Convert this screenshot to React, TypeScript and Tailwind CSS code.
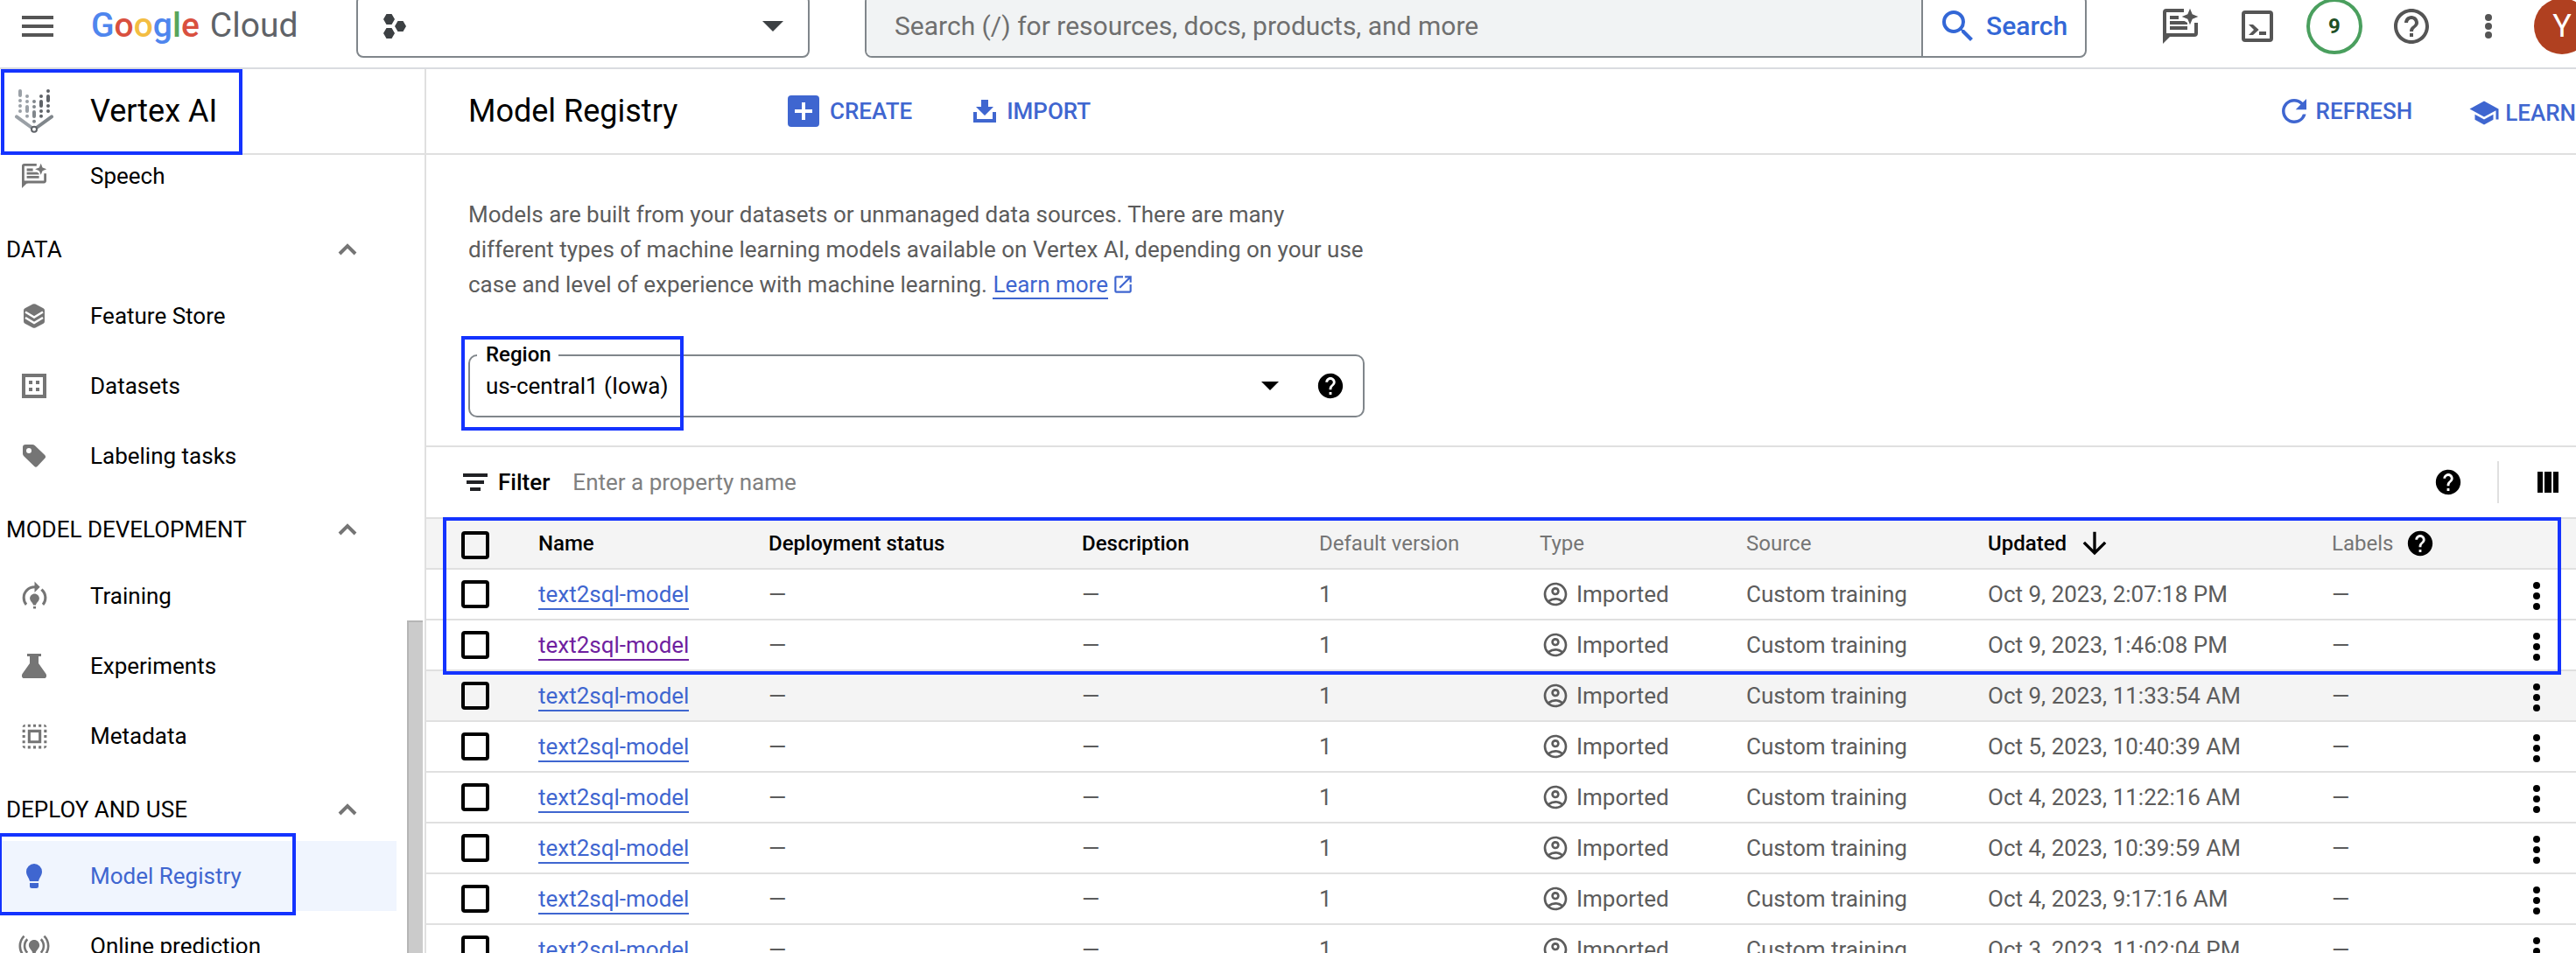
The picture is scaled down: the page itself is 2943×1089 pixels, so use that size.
import type { ReactNode } from "react";
import {
  MdArrowDownward,
  MdHelp,
  MdHelpOutline,
  MdMenu,
  MdModelTraining,
  MdOnlinePrediction,
  MdOpenInNew,
  MdOutlineAccountCircle,
  MdRefresh,
  MdSchool,
  MdSearch,
  MdSelectAll,
} from "react-icons/md";

function ChatSparkIcon({ className }: { className: string }) {
  return (
    <svg viewBox="0 0 120 120" className={className} aria-hidden="true">
      <path d="M72 6H12a6 6 0 0 0-6 6V90H108a6 6 0 0 0 6-6V48" fill="none" stroke="currentColor" strokeWidth="12" />
      <path d="M0 120V86h28v10h-4z" fill="currentColor" />
      <path d="M24 24h30v12H24zM24 42h50l10 6v6H24zM24 60h60v12H24z" fill="currentColor" />
      <path d="M93-1l8 20 20 8-20 8-8 20-8-20-20-8 20-8z" fill="currentColor" />
    </svg>
  );
}

function TerminalIcon() {
  return (
    <svg viewBox="0 0 108 108" className="size-9" aria-hidden="true">
      <rect x="6" y="6" width="96" height="96" rx="6" fill="none" stroke="currentColor" strokeWidth="12" />
      <path d="M24 48h15l20 18-20 18H24l18-18zM60 72h24v12H60z" fill="currentColor" />
    </svg>
  );
}

function ProjectIcon() {
  return (
    <svg viewBox="0 0 26 28" className="h-7 w-[26px]" fill="#3c4043" aria-hidden="true">
      <path d="M3.500 0h6L13 6l-3.500 6h-6L0 6zM3.500 16h6l3.500 6-3.500 6h-6L0 22zM16.500 8h6l3.500 6-3.500 6h-6L13 14z" />
    </svg>
  );
}

function VertexIcon() {
  return (
    <svg viewBox="51 306 132 150" className="h-[50px] w-11" fill="none" strokeWidth="12" strokeLinecap="round" aria-hidden="true">
      <g stroke="#9aa0a6">
        <path d="M69 312V327M69 345v.1M69 363v.1M69 381v.1M93 330v.1M93 348v.1M93 366V381M93 398v.1M57 400L109 438" />
      </g>
      <g stroke="#80868b">
        <path d="M117 348v.1M117 366v.1M117 384V399M117 416v.1M177 400L125 438" />
      </g>
      <g stroke="#5f6368">
        <path d="M141 330v.1M141 348V363M141 381v.1M141 398v.1M165 312v.1M165 330V345M165 363v.1M165 381v.1" />
      </g>
      <circle cx="117" cy="443" r="9" fill="#fff" stroke="#5f6368" strokeWidth="6" />
    </svg>
  );
}

function LayersIcon() {
  return (
    <svg viewBox="0 0 24 28" className="h-7 w-6" aria-hidden="true">
      <path d="M10.500.600a3 3 0 0 1 3 0l9 4.600A3 3 0 0 1 24 7.800v12.400a3 3 0 0 1-1.500 2.600l-9 4.600a3 3 0 0 1-3 0l-9-4.600A3 3 0 0 1 0 20.200V7.800a3 3 0 0 1 1.500-2.600z" fill="currentColor" />
      <path d="M2 9.500l10 6 10-6M2 16l10 6 10-6" fill="none" stroke="#fff" strokeWidth="2.500" />
    </svg>
  );
}

function DatasetIcon() {
  return (
    <svg viewBox="0 0 28 28" className="size-7" aria-hidden="true">
      <rect x="2" y="2" width="24" height="24" fill="none" stroke="currentColor" strokeWidth="4" />
      <path d="M8 8h4v4H8zM16 8h4v4h-4zM8 16h4v4H8zM16 16h4v4h-4z" fill="currentColor" />
    </svg>
  );
}

function TagIcon() {
  return (
    <svg viewBox="0 0 26 26" className="size-[26px]" aria-hidden="true">
      <path d="M3 0h8c1 0 2 .400 2.700 1.100l11.500 11a2.600 2.600 0 0 1 0 3.600l-8.400 9a2.600 2.600 0 0 1-3.700.1L1 13C.400 12.300 0 11.500 0 10.500V3a3 3 0 0 1 3-3z" fill="currentColor" />
      <circle cx="7" cy="7" r="3" fill="#fff" />
    </svg>
  );
}

function FlaskIcon() {
  return (
    <svg viewBox="0 0 28 28" className="size-7" aria-hidden="true">
      <path d="M6 0h16v3h-3v8l8.500 12c1.200 2.200.500 5-2 5h-23c-2.500 0-3.200-2.800-2-5L9 11V3H6z" fill="currentColor" />
    </svg>
  );
}

function BulbIcon() {
  return (
    <svg viewBox="0 0 18 28" className="h-7 w-[18px]" fill="currentColor" aria-hidden="true">
      <path d="M9 0a9 9 0 0 0-9 9c0 4.500 3 6.500 4 11h10c1-4.500 4-6.500 4-11a9 9 0 0 0-9-9zM4 22h10v3.500A2.500 2.500 0 0 1 11.500 28h-5A2.500 2.500 0 0 1 4 25.500z" />
    </svg>
  );
}

function ImportIcon() {
  return (
    <svg viewBox="0 0 26 26" className="size-[26px]" fill="currentColor" aria-hidden="true">
      <path d="M9 0h8v8h6L13 18 3 8h6zM0 14h4v8h18v-8h4v12H0z" />
    </svg>
  );
}

function Caret({ className }: { className: string }) {
  return (
    <svg viewBox="0 0 24 12" className={className} fill="currentColor" aria-hidden="true">
      <path d="M0 0h24L12 12z" />
    </svg>
  );
}

/** Outline drawn over the part of the page being pointed out. */
function Highlight({ className }: { className: string }) {
  return <div aria-hidden="true" className={`pointer-events-none absolute z-10 border-4 border-[#1433ff] ${className}`} />;
}

function TopBar() {
  return (
    <header className="shrink-0 overflow-hidden bg-white">
      <div className="-mt-[18px] flex h-[97px] items-center border-b-2 border-[#dadce0] pl-[19px]">
        <button aria-label="Main menu" className="text-[#555]">
          <MdMenu className="size-12" />
        </button>
        <a href="#" aria-label="Google Cloud" className="ml-9 flex w-[304px] shrink-0 gap-3 pl-px text-[39px] leading-none">
          <span className="font-medium">
            <span className="text-[#4f86ee]">G</span>
            <span className="text-[#d9503f]">o</span>
            <span className="text-[#f3bd42]">o</span>
            <span className="text-[#4f86ee]">g</span>
            <span className="text-[#58a55c]">l</span>
            <span className="text-[#d9503f]">e</span>
          </span>
          <span className="text-[#5f6368]">Cloud</span>
        </a>
        <button
          aria-label="Select a project"
          className="flex h-[72px] w-[518px] shrink-0 items-center justify-between rounded-lg border-2 border-[#80868b] pr-7 pl-[29px] text-[#3c4043]"
        >
          <ProjectIcon />
          <Caret className="h-3 w-6" />
        </button>
        <form className="ml-[63px] flex h-[72px] min-w-0 flex-1 overflow-hidden rounded-lg border-2 border-[#80868b]">
          <input
            type="text"
            aria-label="Search"
            placeholder="Search (/) for resources, docs, products, and more"
            className="min-w-0 flex-1 border-r-2 border-[#80868b] bg-[#f1f3f4] pl-8 text-[30px] outline-none placeholder:text-[#6f6f6f]"
          />
          <button type="button" className="flex w-[185px] items-center gap-2 pl-4 text-[30px] font-medium text-[#3367d6]">
            <MdSearch className="size-12" />
            Search
          </button>
        </form>
        <div className="-mr-4 ml-[63px] flex shrink-0 items-center text-[#555]">
          <button aria-label="Gemini chat" className="flex w-[88px] justify-center">
            <ChatSparkIcon className="size-10 overflow-visible" />
          </button>
          <button aria-label="Cloud Shell" className="flex w-[88px] justify-center">
            <TerminalIcon />
          </button>
          <button
            aria-label="9 notifications"
            className="mx-3 flex size-16 items-center justify-center rounded-full border-4 border-[#4a9f5e] text-2xl font-bold text-[#1e4f26]"
          >
            9
          </button>
          <button aria-label="Help" className="flex w-[88px] justify-center">
            <MdHelpOutline className="size-12" />
          </button>
          <button aria-label="More options" className="flex w-[88px] flex-col items-center gap-[2px]">
            <span className="size-2 rounded-full bg-current" />
            <span className="size-2 rounded-full bg-current" />
            <span className="size-2 rounded-full bg-current" />
          </button>
          <button aria-label="Account" className="ml-2 flex size-16 items-center justify-center rounded-full bg-[#b04020] text-[36px] text-white">
            Y
          </button>
        </div>
      </div>
    </header>
  );
}

function NavItem({ icon, label, active = false }: { icon: ReactNode; label: string; active?: boolean }) {
  return (
    <a
      href="#"
      className={
        active
          ? "relative flex h-20 items-center bg-[#f0f5fe] text-[#3f66d0]"
          : "relative flex h-20 items-center text-black"
      }
    >
      <span className={active ? "flex w-[78px] justify-center" : "flex w-[78px] justify-center text-[#757575]"}>{icon}</span>
      <span className="ml-[25px]">{label}</span>
      {active && <Highlight className="-top-[9px] -left-[2px] h-[94px] w-[340px]" />}
    </a>
  );
}

function NavSection({ label }: { label: string }) {
  return (
    <button className="flex h-20 w-full items-center justify-between pt-2 pr-[45px] pl-[7px] text-left">
      {label}
      <svg viewBox="0 0 22 14" className="h-[14px] w-[22px]" aria-hidden="true">
        <path d="M2 12l9-9 9 9" fill="none" stroke="#757575" strokeWidth="4" />
      </svg>
    </button>
  );
}

function Sidebar() {
  return (
    <aside className="flex w-[487px] shrink-0 flex-col border-r-2 border-[#e0e0e0]">
      <div className="relative flex h-[98px] shrink-0 items-center border-b-2 border-[#e0e0e0] pl-[17px] text-4xl">
        <VertexIcon />
        <h2 className="ml-[42px]">Vertex AI</h2>
        <Highlight className="top-0 left-px h-[98px] w-[276px]" />
      </div>
      <div className="relative min-h-0 flex-1 overflow-hidden">
        <nav className="-mt-4 mr-8 text-[26px]">
          <NavItem icon={<ChatSparkIcon className="size-7 overflow-visible" />} label="Speech" />
          <NavSection label="DATA" />
          <NavItem icon={<LayersIcon />} label="Feature Store" />
          <NavItem icon={<DatasetIcon />} label="Datasets" />
          <NavItem icon={<TagIcon />} label="Labeling tasks" />
          <NavSection label="MODEL DEVELOPMENT" />
          <NavItem icon={<MdModelTraining className="size-[37px]" />} label="Training" />
          <NavItem icon={<FlaskIcon />} label="Experiments" />
          <NavItem icon={<MdSelectAll className="size-[37px]" />} label="Metadata" />
          <NavSection label="DEPLOY AND USE" />
          <NavItem icon={<BulbIcon />} label="Model Registry" active />
          <NavItem icon={<MdOnlinePrediction className="size-[42px]" />} label="Online prediction" />
        </nav>
        <div className="absolute top-[532px] right-[2px] bottom-0 w-[18px] border-t-2 border-l-2 border-[#b5b5b5] bg-[#cbcbcb]" />
      </div>
    </aside>
  );
}

function PageHeader() {
  return (
    <div className="flex h-[98px] shrink-0 items-center border-b-2 border-[#e0e0e0] pl-12 text-[26px] font-medium text-[#3f66d0]">
      <h1 className="w-[365px] text-4xl font-normal text-black">Model Registry</h1>
      <button className="flex items-center gap-3">
        <svg viewBox="0 0 36 36" className="size-9" aria-hidden="true">
          <rect width="36" height="36" rx="4" fill="currentColor" />
          <path d="M18 8v20M8 18h20" stroke="#fff" strokeWidth="4" />
        </svg>
        CREATE
      </button>
      <button className="ml-[70px] flex items-center gap-3">
        <ImportIcon />
        IMPORT
      </button>
      <button className="ml-auto flex items-center gap-1">
        <MdRefresh className="size-[42px]" />
        REFRESH
      </button>
      <button className="ml-16 flex items-center gap-[6px] pt-1">
        <MdSchool className="size-9" />
        LEARN
      </button>
    </div>
  );
}

function RegionField() {
  return (
    <div className="relative mt-[60px] flex h-[72px] w-[1024px] items-center rounded-[10px] border-2 border-[#80868b]">
      <label htmlFor="region" className="absolute -top-4 left-2 bg-white pr-2 pl-[10px] text-2xl leading-7 font-medium text-black">
        Region
      </label>
      <select id="region" className="h-full flex-1 appearance-none bg-transparent pl-[18px] text-[26px] text-black outline-none">
        <option>us-central1 (Iowa)</option>
      </select>
      <Caret className="pointer-events-none mr-[42px] h-[10px] w-5 text-black" />
      <button aria-label="About regions" className="mr-5 text-black">
        <MdHelp className="size-[34px]" />
      </button>
      <Highlight className="-top-[23px] -left-[10px] h-[108px] w-[254px]" />
    </div>
  );
}

function FilterBar() {
  return (
    <div className="flex h-[84px] items-center border-y-2 border-[#e0e0e0] pl-[42px] text-[26px]">
      <svg viewBox="0 0 28 20" className="h-5 w-7" fill="#202124" aria-hidden="true">
        <path d="M0 0h28v4H0zM4 8h20v4H4zM8 16h12v4H8z" />
      </svg>
      <label htmlFor="filter" className="ml-3 font-medium text-black">
        Filter
      </label>
      <input
        id="filter"
        type="text"
        placeholder="Enter a property name"
        className="ml-[26px] min-w-0 flex-1 outline-none placeholder:text-[#808080]"
      />
      <button aria-label="Filter help" className="text-black">
        <MdHelp className="size-[34px]" />
      </button>
      <div className="ml-[39px] h-12 w-[2px] bg-[#e0e0e0]" />
      <button aria-label="Column display options" className="mr-5 ml-11 flex h-6 gap-[2px]">
        <span className="w-[6px] bg-black" />
        <span className="w-2 bg-black" />
        <span className="w-[6px] bg-black" />
      </button>
    </div>
  );
}

const rows = [
  { updated: "Oct 9, 2023, 2:07:18 PM" },
  { updated: "Oct 9, 2023, 1:46:08 PM", visited: true },
  { updated: "Oct 9, 2023, 11:33:54 AM", hovered: true },
  { updated: "Oct 5, 2023, 10:40:39 AM" },
  { updated: "Oct 4, 2023, 11:22:16 AM" },
  { updated: "Oct 4, 2023, 10:39:59 AM" },
  { updated: "Oct 4, 2023, 9:17:16 AM" },
  { updated: "Oct 3, 2023, 11:02:04 PM" },
];

function Checkbox({ label }: { label: string }) {
  return (
    <input
      type="checkbox"
      aria-label={label}
      className="ml-10 block size-8 appearance-none rounded border-4 border-black bg-transparent"
    />
  );
}

const cell = "border-b-2 border-[#e0e0e0] p-0";

function ModelTable() {
  return (
    <div className="relative">
      <table className="w-full table-fixed border-separate border-spacing-0 text-left text-[26px] whitespace-nowrap text-[#5c5c5c]">
        <colgroup>
          <col className="w-32" />
          <col className="w-[263px]" />
          <col className="w-[358px]" />
          <col className="w-[271px]" />
          <col className="w-[252px]" />
          <col className="w-[236px]" />
          <col className="w-[276px]" />
          <col className="w-[393px]" />
          <col />
          <col className="w-[49px]" />
        </colgroup>
        <thead className="bg-[#f4f4f4] text-2xl text-[#757575]">
          <tr className="h-[58px]">
            <th className={`${cell} pt-1`}><Checkbox label="Select all models" /></th>
            <th className={`${cell} font-medium text-black`}>Name</th>
            <th className={`${cell} font-medium text-black`}>Deployment status</th>
            <th className={`${cell} font-medium text-black`}>Description</th>
            <th className={`${cell} font-normal`}>Default version</th>
            <th className={`${cell} font-normal`}>Type</th>
            <th className={`${cell} font-normal`}>Source</th>
            <th className={`${cell} font-medium text-black`}>
              <button className="flex items-center gap-3">
                Updated
                <MdArrowDownward className="size-10" />
              </button>
            </th>
            <th className={`${cell} font-normal`}>
              <div className="flex items-center gap-[14px]">
                Labels
                <MdHelp className="size-[34px] text-black" />
              </div>
            </th>
            <th className={cell} />
          </tr>
        </thead>
        <tbody>
          {rows.map((row) => (
            <tr key={row.updated} className={row.hovered ? "h-[58px] bg-[#f4f4f4]" : "h-[58px]"}>
              <td className={cell}><Checkbox label={`Select model updated ${row.updated}`} /></td>
              <td className={cell}>
                <a
                  href="#"
                  className={
                    row.visited
                      ? "inline-block border-b-2 border-current leading-8 text-[#6f1f9f]"
                      : "inline-block border-b-2 border-current leading-8 text-[#3f66d0]"
                  }
                >
                  text2sql-model
                </a>
              </td>
              <td className={cell}>—</td>
              <td className={cell}>—</td>
              <td className={cell}>1</td>
              <td className={cell}>
                <div className="flex items-center gap-2 pl-[2px]">
                  <MdOutlineAccountCircle className="size-8" />
                  Imported
                </div>
              </td>
              <td className={cell}>Custom training</td>
              <td className={cell}>{row.updated}</td>
              <td className={cell}>—</td>
              <td className={cell}>
                <button aria-label="Model actions" className="flex flex-col gap-1 pt-1">
                  <span className="size-2 rounded-full bg-black" />
                  <span className="size-2 rounded-full bg-black" />
                  <span className="size-2 rounded-full bg-black" />
                </button>
              </td>
            </tr>
          ))}
        </tbody>
      </table>
      <Highlight className="-top-[2px] right-[17px] left-[19px] h-[180px]" />
    </div>
  );
}

export default function App() {
  return (
    <div className="flex h-screen flex-col overflow-hidden bg-white font-['Roboto',sans-serif] text-black">
      <TopBar />
      <div className="flex min-h-0 flex-1">
        <Sidebar />
        <main className="flex min-w-0 flex-1 flex-col overflow-hidden">
          <PageHeader />
          <div className="min-h-0 flex-1 overflow-hidden">
            <section className="px-12 pt-12 pb-8">
              <p className="max-w-[1030px] text-[26px] leading-10 text-[#5c5c5c]">
                Models are built from your datasets or unmanaged data sources. There are many different types of machine
                learning models available on Vertex AI, depending on your use case and level of experience with machine
                learning.{" "}
                <a href="#" className="text-[#3f66d0]">
                  <span className="border-b-2 border-current">Learn more</span>
                  <MdOpenInNew className="ml-1 inline size-[26px] align-[-4px]" />
                </a>
              </p>
              <RegionField />
            </section>
            <FilterBar />
            <ModelTable />
          </div>
        </main>
      </div>
    </div>
  );
}
